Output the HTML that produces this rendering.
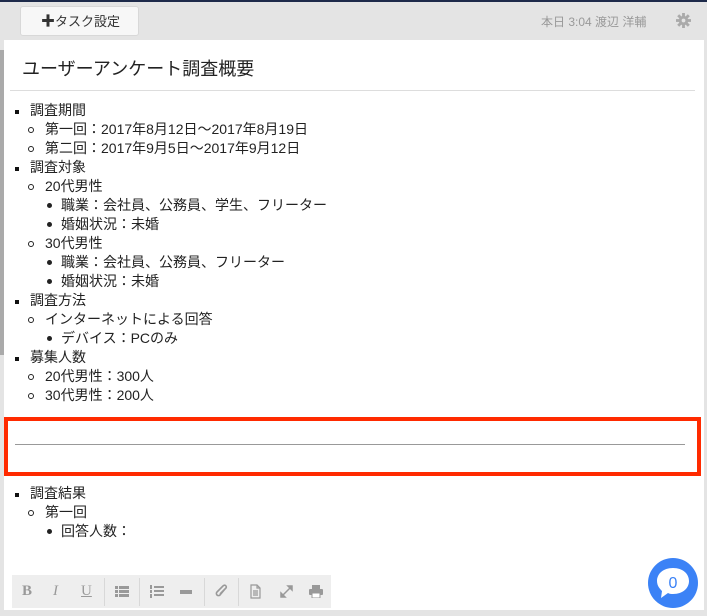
<!DOCTYPE html>
<html><head><meta charset="utf-8"><style>
*{margin:0;padding:0;box-sizing:border-box}
body{width:707px;height:616px;overflow:hidden;background:#e4e4e4;font-family:"Liberation Sans","Noto Sans CJK JP",sans-serif;color:#222;position:relative}
.topline{position:absolute;left:0;top:0;width:707px;height:2px;background:#1d2a4a}
.btn{position:absolute;left:20px;top:6px;width:119px;height:30px;background:#f7f7f7;border:1px solid #d8d8d8;border-radius:3px;font-size:13px;color:#333;line-height:28px;padding-left:20px}
.meta{position:absolute;left:541px;top:13px;font-size:12px;color:#999}
.gear{position:absolute;left:676px;top:13px}
.panel{position:absolute;left:4px;top:40px;width:700px;height:570px;background:#fff}
.sb{position:absolute;left:0;top:50px;width:4px;height:305px;background:#aaa}
.title{position:absolute;left:22px;top:55px;font-size:18px;color:#222}
.hr1{position:absolute;left:10px;top:90px;width:685px;height:1px;background:#ddd}
.t{position:absolute;font-size:14px;line-height:19px;white-space:nowrap}
.sq{position:absolute;width:4px;height:4px;background:#111;margin-top:-2px}
.ci{position:absolute;width:6px;height:6px;border:1px solid #222;border-radius:50%;margin-top:-2px}
.di{position:absolute;width:5px;height:5px;background:#222;border-radius:50%;margin-top:-2px}
.red{position:absolute;left:4px;top:417px;width:697px;height:59px;border:4px solid #ff2a00}
.hr2{position:absolute;left:15px;top:444px;width:670px;height:1px;background:#999}
.tb{position:absolute;left:12px;top:575px;width:319px;height:33px;background:#eee}
.tb span{position:absolute;top:0;height:33px;line-height:33px;color:#999;font-size:14px}
.sep{position:absolute;top:3px;width:1px;height:28px;background:#d8d8d8}
.chat{position:absolute;left:648px;top:558px;width:50px;height:50px;border-radius:50%;background:#3b82f6}
</style></head><body>
<div class="topline"></div>
<div class="btn"><b style="font-size:14px">✚</b>タスク設定</div>
<div class="meta">本日 3:04 渡辺 洋輔</div>
<svg class="gear" width="15" height="15" viewBox="0 0 16 16"><g fill="#aaa"><circle cx="8" cy="8" r="5"/><rect x="6.5" y="0" width="3" height="16"/><rect x="0" y="6.5" width="16" height="3"/><rect x="6.5" y="0" width="3" height="16" transform="rotate(45 8 8)"/><rect x="6.5" y="0" width="3" height="16" transform="rotate(-45 8 8)"/></g><circle cx="8" cy="8" r="2" fill="#e4e4e4"/></svg>
<div class="panel"></div>
<div class="sb"></div>
<div class="title">ユーザーアンケート調査概要</div>
<div class="hr1"></div>

<div class="sq" style="left:15px;top:112px"></div><div class="t" style="left:30px;top:101px">調査期間</div>
<div class="ci" style="left:28px;top:129px"></div><div class="t" style="left:45px;top:120px">第一回：2017年8月12日〜2017年8月19日</div>
<div class="ci" style="left:28px;top:148px"></div><div class="t" style="left:45px;top:139px">第二回：2017年9月5日〜2017年9月12日</div>
<div class="sq" style="left:15px;top:169px"></div><div class="t" style="left:30px;top:158px">調査対象</div>
<div class="ci" style="left:28px;top:186px"></div><div class="t" style="left:45px;top:177px">20代男性</div>
<div class="di" style="left:47px;top:205px"></div><div class="t" style="left:61px;top:196px">職業：会社員、公務員、学生、フリーター</div>
<div class="di" style="left:47px;top:224px"></div><div class="t" style="left:61px;top:215px">婚姻状況：未婚</div>
<div class="ci" style="left:28px;top:243px"></div><div class="t" style="left:45px;top:234px">30代男性</div>
<div class="di" style="left:47px;top:262px"></div><div class="t" style="left:61px;top:253px">職業：会社員、公務員、フリーター</div>
<div class="di" style="left:47px;top:281px"></div><div class="t" style="left:61px;top:272px">婚姻状況：未婚</div>
<div class="sq" style="left:15px;top:302px"></div><div class="t" style="left:30px;top:291px">調査方法</div>
<div class="ci" style="left:28px;top:319px"></div><div class="t" style="left:45px;top:310px">インターネットによる回答</div>
<div class="di" style="left:47px;top:338px"></div><div class="t" style="left:61px;top:329px">デバイス：PCのみ</div>
<div class="sq" style="left:15px;top:359px"></div><div class="t" style="left:30px;top:348px">募集人数</div>
<div class="ci" style="left:28px;top:376px"></div><div class="t" style="left:45px;top:367px">20代男性：300人</div>
<div class="ci" style="left:28px;top:395px"></div><div class="t" style="left:45px;top:386px">30代男性：200人</div>

<div class="red"></div>
<div class="hr2"></div>

<div class="sq" style="left:15px;top:495px"></div><div class="t" style="left:30px;top:484px">調査結果</div>
<div class="ci" style="left:28px;top:512px"></div><div class="t" style="left:45px;top:503px">第一回</div>
<div class="di" style="left:47px;top:531px"></div><div class="t" style="left:61px;top:522px">回答人数：</div>

<div class="tb">
<span style="left:10px;font-family:'Liberation Serif',serif;font-weight:bold;font-size:15px">B</span>
<span style="left:41px;font-family:'Liberation Serif',serif;font-style:italic;font-size:15px">I</span>
<span style="left:69px;font-family:'Liberation Serif',serif;text-decoration:underline;font-size:15px">U</span>
<div class="sep" style="left:92px"></div>
<svg style="position:absolute;left:103px;top:11px" width="14" height="11" viewBox="0 0 14 11" fill="#999"><rect x="0" y="0" width="3" height="3"/><rect x="4" y="0" width="10" height="3"/><rect x="0" y="4" width="3" height="3"/><rect x="4" y="4" width="10" height="3"/><rect x="0" y="8" width="3" height="3"/><rect x="4" y="8" width="10" height="3"/></svg>
<div class="sep" style="left:127px"></div>
<svg style="position:absolute;left:138px;top:10px" width="14" height="13" viewBox="0 0 14 13" fill="#999"><rect x="0" y="0" width="2" height="4"/><rect x="0" y="5" width="2" height="3"/><rect x="0" y="9" width="2" height="4"/><rect x="4" y="1" width="10" height="2"/><rect x="4" y="5" width="10" height="2"/><rect x="4" y="9" width="10" height="2"/></svg>
<svg style="position:absolute;left:168px;top:15px" width="12" height="4"><rect width="12" height="4" fill="#999"/></svg>
<div class="sep" style="left:192px"></div>
<svg style="position:absolute;left:203px;top:9px" width="13" height="15" viewBox="0 0 13 15"><path d="M10 5 L5 11 A2 2 0 0 1 2 8 L8 2 A1.3 1.3 0 0 1 11 4 L5 10" fill="none" stroke="#999" stroke-width="1.6"/></svg>
<div class="sep" style="left:226px"></div>
<svg style="position:absolute;left:238px;top:9px" width="11" height="15" viewBox="0 0 11 15"><path d="M1 1H7L10 4V14H1Z M7 1V4H10 M3 7H8 M3 9H8 M3 11H8" fill="none" stroke="#999" stroke-width="1.2"/></svg>
<svg style="position:absolute;left:268px;top:10px" width="13" height="13" viewBox="0 0 13 13"><path d="M8 1H12V5Z M1 12V8L5 12Z M3 10L10 3" fill="#999" stroke="#999" stroke-width="1.5"/></svg>
<svg style="position:absolute;left:297px;top:10px" width="14" height="13" viewBox="0 0 14 13" fill="#999"><rect x="3" y="0" width="8" height="4"/><rect x="0" y="4" width="14" height="6" rx="1"/><rect x="3" y="8" width="8" height="5" fill="#fff" stroke="#999"/></svg>
</div>

<div class="chat">
<svg width="50" height="50" viewBox="0 0 50 50"><path d="M25 10 C15 10 9 16 9 23 C9 28 12 31 14 33 L13 40 L20 35 C22 36 23 36 25 36 C35 36 41 30 41 23 C41 16 35 10 25 10Z" fill="#fff"/><text x="25" y="30" text-anchor="middle" font-family="Liberation Sans,sans-serif" font-size="16" fill="#3b82f6">0</text></svg>
</div>
</body></html>
